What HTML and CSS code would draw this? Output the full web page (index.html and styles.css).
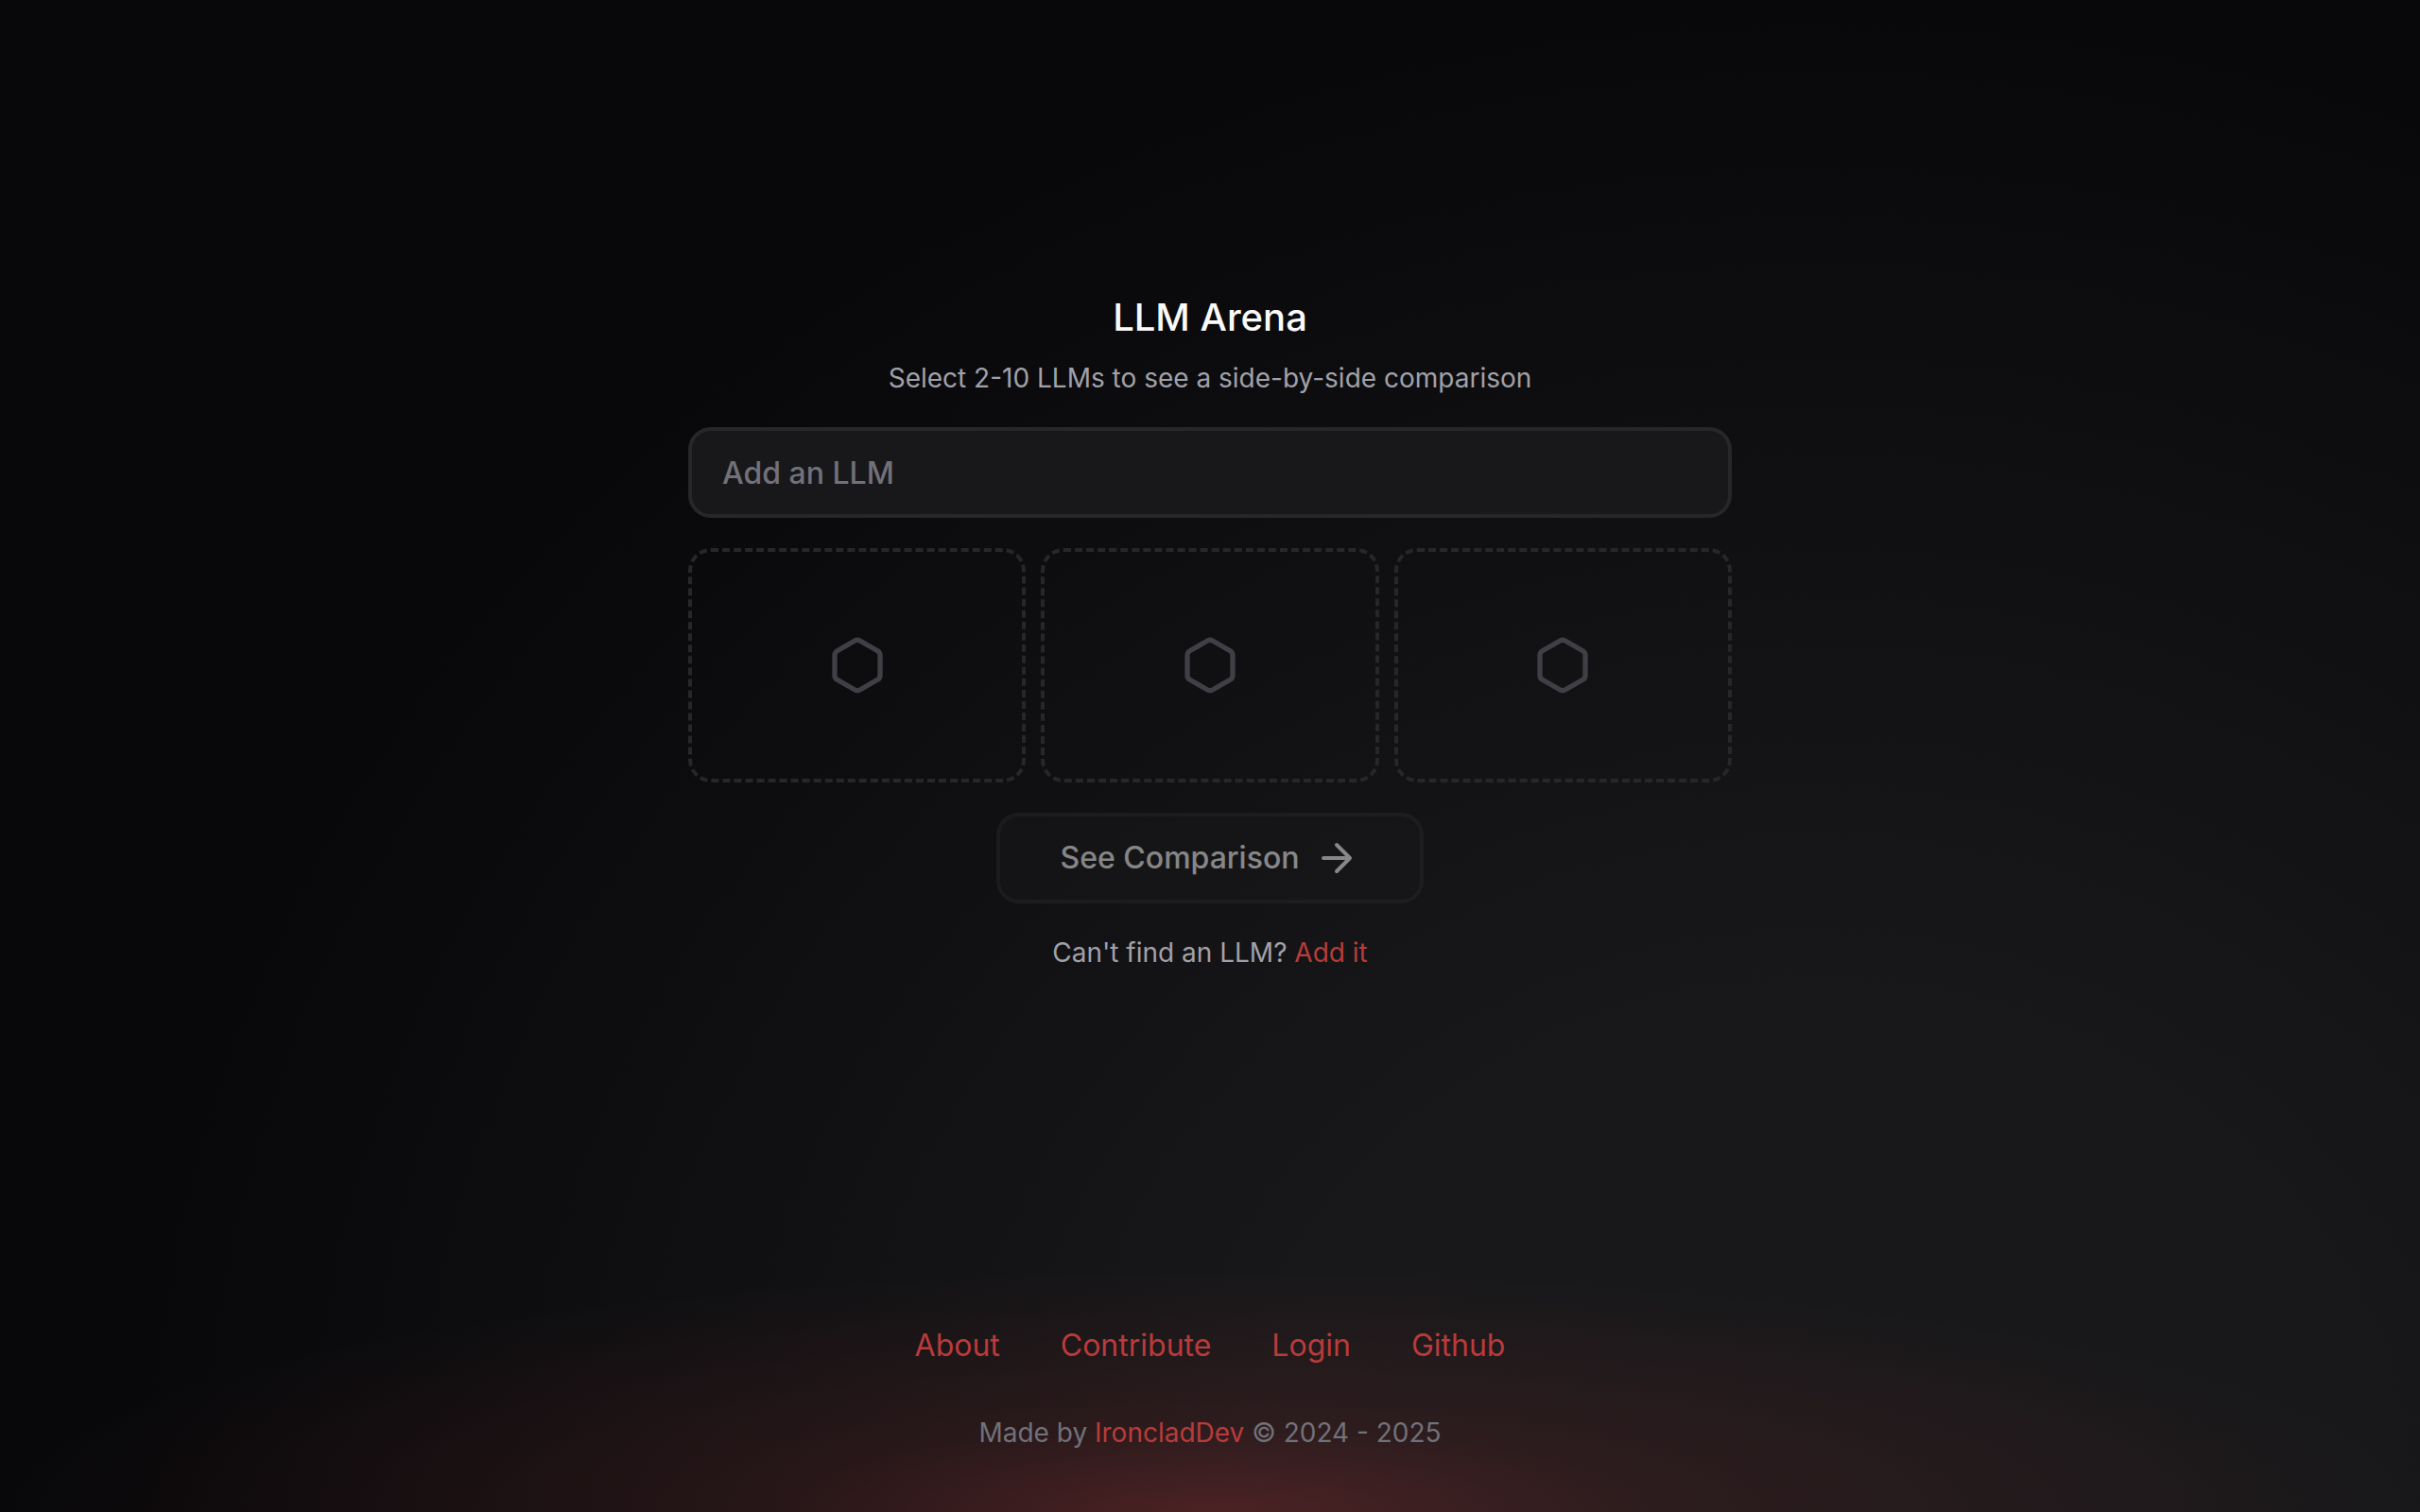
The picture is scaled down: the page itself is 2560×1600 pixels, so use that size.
FILE: index.html
```
<!DOCTYPE html>
<html lang="en">
	<head>
		<meta charset="utf-8">
		<meta name="viewport" content="width=device-width, initial-scale=1">
		<title>LLM Arena</title>
		<link rel="stylesheet" href="styles.css">
	</head>
	<body>
		<main class="arena">
			<div class="heading">
				<h1 class="title">LLM Arena</h1>
				<label class="text" for="search">Select 2-10 LLMs to see a side-by-side comparison</label>
			</div>
			<input class="search" id="search" type="text" placeholder="Add an LLM">
			<div class="slots">
				<div class="slot">
					<svg class="hexagon" viewBox="0 0 24 24">
						<path d="M21 16V8a2 2 0 0 0-1-1.73l-7-4a2 2 0 0 0-2 0l-7 4A2 2 0 0 0 3 8v8a2 2 0 0 0 1 1.73l7 4a2 2 0 0 0 2 0l7-4A2 2 0 0 0 21 16z" />
					</svg>
				</div>
				<div class="slot">
					<svg class="hexagon" viewBox="0 0 24 24">
						<path d="M21 16V8a2 2 0 0 0-1-1.73l-7-4a2 2 0 0 0-2 0l-7 4A2 2 0 0 0 3 8v8a2 2 0 0 0 1 1.73l7 4a2 2 0 0 0 2 0l7-4A2 2 0 0 0 21 16z" />
					</svg>
				</div>
				<div class="slot">
					<svg class="hexagon" viewBox="0 0 24 24">
						<path d="M21 16V8a2 2 0 0 0-1-1.73l-7-4a2 2 0 0 0-2 0l-7 4A2 2 0 0 0 3 8v8a2 2 0 0 0 1 1.73l7 4a2 2 0 0 0 2 0l7-4A2 2 0 0 0 21 16z" />
					</svg>
				</div>
			</div>
			<button class="compare" type="button" disabled>
				See Comparison
				<svg class="arrow" viewBox="0 0 24 24">
					<path d="M5 12h14M12 5l7 7-7 7" />
				</svg>
			</button>
			<p class="text">Can't find an LLM? <a class="link" href="#">Add it</a></p>
		</main>
		<footer class="footer">
			<nav class="nav">
				<a class="link" href="#">About</a>
				<a class="link" href="#">Contribute</a>
				<a class="link" href="#">Login</a>
				<a class="link" href="#">Github</a>
			</nav>
			<p class="text muted">Made by <a class="link" href="#">IroncladDev</a> © 2024 - 2025</p>
		</footer>
	</body>
</html>
```

FILE: styles.css
```
* {
	box-sizing: border-box;
}
body {
	min-height: 100vh;
	margin: 0;
	display: flex;
	flex-direction: column;
	background-color: #09090b;
	background-image:
		radial-gradient(
			ellipse 50% 16% at 50% 100%,
			rgba(185, 56, 56, 0.32),
			rgba(185, 56, 56, 0.13) 36%,
			rgba(185, 56, 56, 0)
		),
		radial-gradient(ellipse 70% 100% at 75% 100%, #18181a 33%, #08080a);
	font-family: Inter, "Liberation Sans", sans-serif;
	color: #fafafa;
}
.arena {
	flex: 1;
	display: flex;
	flex-direction: column;
	justify-content: center;
	align-items: center;
	gap: 32px;
	width: 100%;
	max-width: 1104px;
	margin: 0 auto;
}
.heading {
	display: flex;
	flex-direction: column;
	align-items: center;
	gap: 16px;
}
.title {
	margin: 0;
	font-size: 40px;
	line-height: 56px;
	font-weight: 500;
}
.text {
	margin: 0;
	font-size: 28px;
	line-height: 40px;
	color: #a1a1aa;
}
.search {
	width: 100%;
	height: 96px;
	padding: 0 32px;
	border: 4px solid #27272a;
	border-radius: 24px;
	background: #18181b;
	font: 500 32px/48px Inter, "Liberation Sans", sans-serif;
	color: #fafafa;
}
.search::placeholder {
	color: #71717a;
	opacity: 1;
}
.slots {
	width: 100%;
	display: grid;
	grid-template-columns: repeat(3, 1fr);
	gap: 16px;
}
.slot {
	height: 248px;
	display: flex;
	justify-content: center;
	align-items: center;
	border: 4px dashed #27272a;
	border-radius: 24px;
}
.hexagon,
.arrow {
	fill: none;
	stroke: currentColor;
	stroke-width: 2;
	stroke-linecap: round;
	stroke-linejoin: round;
}
.hexagon {
	width: 64px;
	height: 64px;
	color: #3f3f46;
}
.compare {
	height: 96px;
	padding: 0 64px;
	display: flex;
	align-items: center;
	gap: 16px;
	border: 4px solid #27272a;
	border-radius: 24px;
	background: #18181b;
	font: 500 32px/48px Inter, "Liberation Sans", sans-serif;
	color: #fafafa;
	opacity: 0.5;
}
.arrow {
	width: 48px;
	height: 48px;
}
.link {
	color: #b93b3b;
	text-decoration: none;
}
.footer {
	padding: 64px 0;
	display: flex;
	flex-direction: column;
	align-items: center;
	gap: 48px;
}
.nav {
	display: flex;
	gap: 64px;
	font-size: 32px;
	line-height: 48px;
}
.muted {
	color: #71717a;
}
```
